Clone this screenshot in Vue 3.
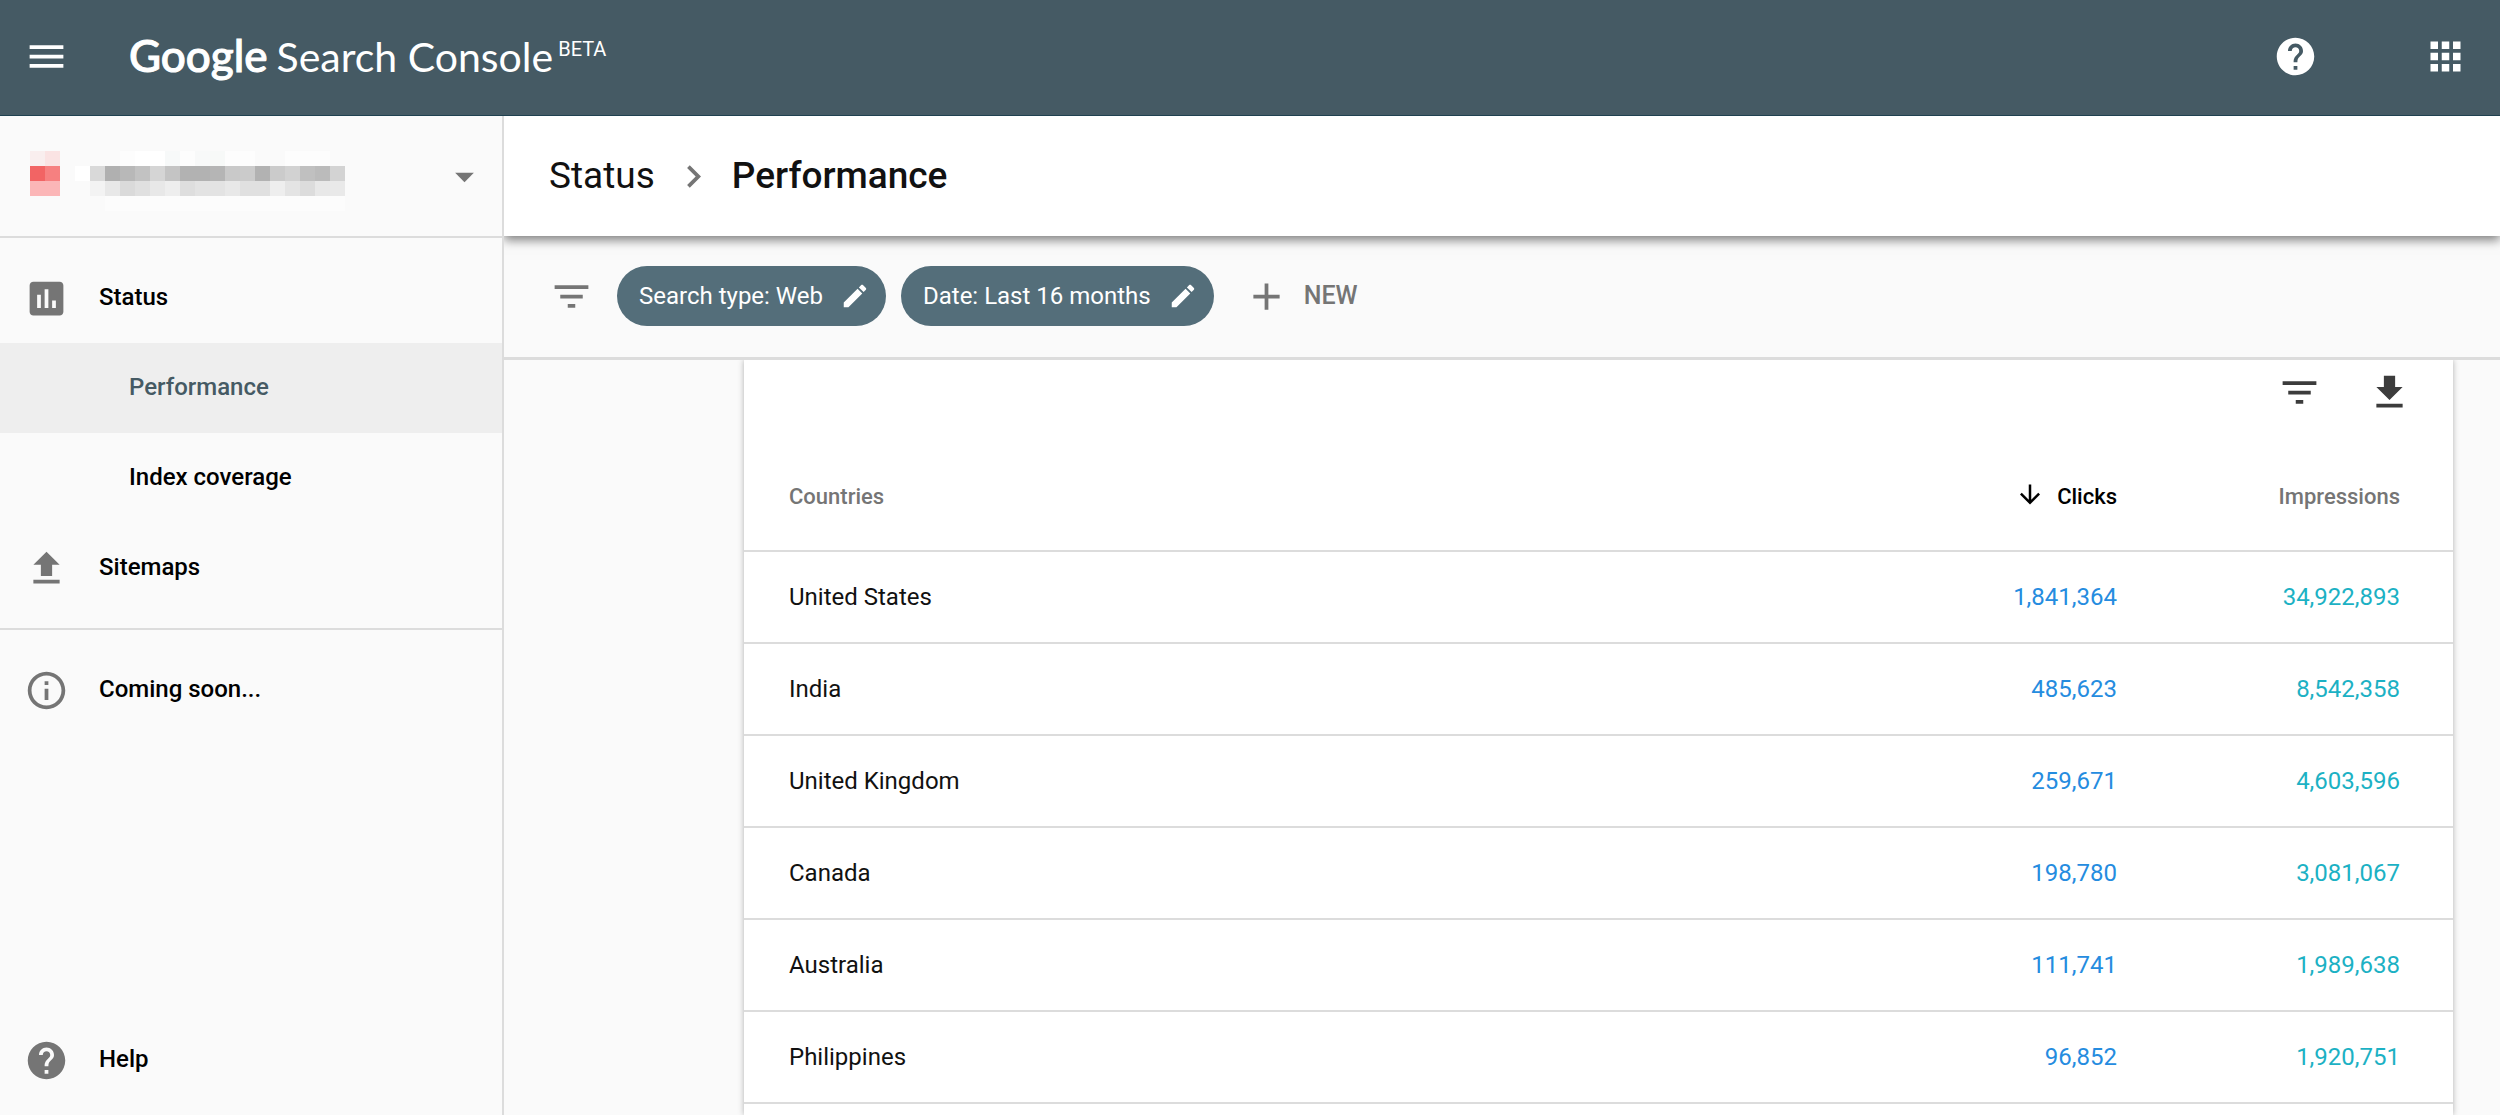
<template>
  <div class="console">
    <header class="topbar">
      <button class="icon-btn" type="button" aria-label="Menu">
        <svg class="icon" viewBox="0 0 24 24"><path d="M3 18h18v-2H3v2zm0-5h18v-2H3v2zm0-7v2h18V6H3z" /></svg>
      </button>
      <a class="logo" href="#">
        <span class="logo-google">Google</span>
        <span class="logo-product">Search Console</span>
        <span class="logo-beta">BETA</span>
      </a>
      <div class="topbar-actions">
        <button class="icon-btn" type="button" aria-label="Help">
          <svg class="icon" viewBox="0 0 24 24"><path :d="icons.help" /></svg>
        </button>
        <button class="icon-btn" type="button" aria-label="Google apps">
          <svg class="icon" viewBox="0 0 24 24"><path d="M4 8h4V4H4v4zm6 12h4v-4h-4v4zm-6 0h4v-4H4v4zm0-6h4v-4H4v4zm6 0h4v-4h-4v4zm6-10v4h4V4h-4zm-6 4h4V4h-4v4zm6 6h4v-4h-4v4zm0 6h4v-4h-4v4z" /></svg>
        </button>
      </div>
    </header>

    <div class="body">
      <aside class="sidebar">
        <button class="property" type="button" aria-label="Select property">
          <svg class="mosaic" viewBox="0 0 22 4" shape-rendering="crispEdges" aria-hidden="true">
            <rect v-for="c in mosaic" :key="c.key" :x="c.x" :y="c.y" width="1" height="1" :fill="c.fill" />
          </svg>
          <svg class="icon muted" viewBox="0 0 24 24"><path d="M7 10l5 5 5-5z" /></svg>
        </button>

        <nav class="nav">
          <template v-for="item in navItems" :key="item.label">
            <hr v-if="item.divider" class="divider">
            <a
              href="#"
              class="nav-item"
              :class="{ active: item.active, child: item.child, bottom: item.bottom }"
            >
              <svg v-if="item.icon" class="icon muted" viewBox="0 0 24 24"><path :d="icons[item.icon]" /></svg>
              <span>{{ item.label }}</span>
            </a>
          </template>
        </nav>
      </aside>

      <main class="content">
        <div class="breadcrumb">
          <a href="#">Status</a>
          <svg class="icon muted" viewBox="0 0 24 24"><path d="M10 6L8.59 7.41 13.17 12l-4.58 4.59L10 18l6-6z" /></svg>
          <h1>Performance</h1>
        </div>

        <div class="filters">
          <svg class="icon muted" viewBox="0 0 24 24"><path :d="icons.filter" /></svg>
          <div class="chips">
            <button v-for="chip in chips" :key="chip" class="chip" type="button">
              {{ chip }}
              <svg class="icon-small" viewBox="0 0 24 24"><path :d="icons.edit" /></svg>
            </button>
          </div>
          <button class="new-btn" type="button">
            <svg class="icon" viewBox="0 0 24 24"><path d="M19 13h-6v6h-2v-6H5v-2h6V5h2v6h6v2z" /></svg>
            NEW
          </button>
        </div>

        <div class="scroll-area">
          <section class="card">
            <div class="card-tools">
              <button class="icon-btn" type="button" aria-label="Filter rows">
                <svg class="icon" viewBox="0 0 24 24"><path :d="icons.filter" /></svg>
              </button>
              <button class="icon-btn" type="button" aria-label="Download">
                <svg class="icon" viewBox="0 0 24 24"><path d="M19 9h-4V3H9v6H5l7 7 7-7zM5 18v2h14v-2H5z" /></svg>
              </button>
            </div>
            <table>
              <thead>
                <tr>
                  <th scope="col">Countries</th>
                  <th scope="col" class="num sorted" aria-sort="descending">
                    <span class="sort">
                      <svg class="icon-small" viewBox="0 0 24 24"><path d="M20 10l-1.41-1.41L13 14.17V2h-2v12.17l-5.58-5.59L4 10l8 8 8-8z" /></svg>
                      Clicks
                    </span>
                  </th>
                  <th scope="col" class="num last">Impressions</th>
                </tr>
              </thead>
              <tbody>
                <tr v-for="row in rows" :key="row.country">
                  <td>{{ row.country }}</td>
                  <td class="num clicks">{{ row.clicks.toLocaleString('en-US') }}</td>
                  <td class="num last impressions">{{ row.impressions.toLocaleString('en-US') }}</td>
                </tr>
              </tbody>
            </table>
          </section>
        </div>
      </main>
    </div>
  </div>
</template>

<script setup>
const icons = {
  help: 'M12 2C6.48 2 2 6.48 2 12s4.48 10 10 10 10-4.48 10-10S17.52 2 12 2zm1 17h-2v-2h2v2zm2.07-7.75l-.9.92C13.45 12.9 13 13.5 13 15h-2v-.5c0-1.1.45-2.1 1.17-2.83l1.24-1.26c.37-.36.59-.86.59-1.41 0-1.1-.9-2-2-2s-2 .9-2 2H8c0-2.21 1.79-4 4-4s4 1.79 4 4c0 .88-.36 1.68-.93 2.25z',
  chart: 'M19 3H5c-1.1 0-2 .9-2 2v14c0 1.1.9 2 2 2h14c1.1 0 2-.9 2-2V5c0-1.1-.9-2-2-2zM9 17H7v-7h2v7zm4 0h-2V7h2v10zm4 0h-2v-4h2v4z',
  upload: 'M9 16h6v-6h4l-7-7-7 7h4zm-4 2h14v2H5z',
  info: 'M11 7h2v2h-2zm0 4h2v6h-2zm1-9C6.48 2 2 6.48 2 12s4.48 10 10 10 10-4.48 10-10S17.52 2 12 2zm0 18c-4.41 0-8-3.59-8-8s3.59-8 8-8 8 3.59 8 8-3.59 8-8 8z',
  filter: 'M10 18h4v-2h-4v2zM3 6v2h18V6H3zm3 7h12v-2H6v2z',
  edit: 'M3 17.25V21h3.75L17.81 9.94l-3.75-3.75L3 17.25zM20.71 7.04c.39-.39.39-1.02 0-1.41l-2.34-2.34c-.39-.39-1.02-.39-1.41 0l-1.83 1.83 3.75 3.75 1.83-1.83z'
}

const navItems = [
  { label: 'Status', icon: 'chart' },
  { label: 'Performance', child: true, active: true },
  { label: 'Index coverage', child: true },
  { label: 'Sitemaps', icon: 'upload' },
  { label: 'Coming soon...', icon: 'info', divider: true },
  { label: 'Help', icon: 'help', bottom: true }
]

const chips = ['Search type: Web', 'Date: Last 16 months']

const rows = [
  { country: 'United States', clicks: 1841364, impressions: 34922893 },
  { country: 'India', clicks: 485623, impressions: 8542358 },
  { country: 'United Kingdom', clicks: 259671, impressions: 4603596 },
  { country: 'Canada', clicks: 198780, impressions: 3081067 },
  { country: 'Australia', clicks: 111741, impressions: 1989638 },
  { country: 'Philippines', clicks: 96852, impressions: 1920751 }
]

// Pixelated favicon and property name, one colour per cell
const mosaicRows = [
  '#f9eeee #fae3e3 - - - - #fdfdfd #fff #fff #f7f9f9 #fdfdfd #f8f9f9 #f7f9f8 #fdfdfd #fdfdfd #fafafa #fafafa #fdfdfd #fdfdfd #fdfdfd - -',
  '#f26464 #f68080 - #fff #d9d9d9 #b0b0b0 #b8b8b8 #c2c2c2 #d5d5d5 #c4c4c4 #b2b2b2 #b2b2b2 #b5b5b5 #c9c9c9 #cbcbcb #b2b2b2 #cbcbcb #d2d2d2 #c0c0c0 #bbbbbb #d3d3d3 -',
  '#fbb6b7 #fbb6b7 - - #f3f3f3 #e8e8e8 #dadada #e0e0e0 #e8e8e8 #eeeeee #dedede #e3e3e3 #e3e3e3 #e8e8e8 #e0e0e0 #e0e0e0 #eeeeee #e4e4e4 #dcdcdc #e8e8e8 #e9e9e9 -',
  '- - - - - #fcfcfc #fcfcfc #fcfcfc #fcfcfc #fcfcfc #fcfcfc #fcfcfc #fcfcfc #fcfcfc #fcfcfc #fcfcfc #fcfcfc #fcfcfc #fcfcfc #fcfcfc #fcfcfc -'
]

const mosaic = mosaicRows.flatMap((line, y) =>
  line
    .split(' ')
    .map((fill, x) => ({ key: `${x}-${y}`, x, y, fill }))
    .filter(c => c.fill !== '-')
)
</script>

<style>
body {
  margin: 0;
}
</style>

<style scoped>
.console {
  display: flex;
  flex-direction: column;
  height: 100vh;
  overflow: hidden;
  font-family: Roboto, "Liberation Sans", sans-serif;
  font-size: 24px;
  line-height: 30px;
  color: #111;
  background: #fafafa;
}

a {
  color: inherit;
  text-decoration: none;
}

button {
  border: 0;
  padding: 0;
  background: none;
  color: inherit;
  font: inherit;
  cursor: pointer;
}

.icon,
.icon-small {
  display: block;
  flex: none;
  width: 45px;
  height: 45px;
  fill: currentColor;
}

.icon-small {
  width: 30px;
  height: 30px;
}

.muted {
  color: #757575;
}

/* Top bar */
.topbar {
  display: flex;
  align-items: center;
  box-sizing: border-box;
  flex: none;
  height: 116px;
  padding: 0 32px 3px 24px;
  border-bottom: 1px solid #1f4150;
  background: #455a64;
  color: #fff;
}

.logo {
  display: flex;
  align-items: baseline;
  margin-left: 60px;
  font-family: Lato, "Open Sans", sans-serif;
  font-size: 40px;
  line-height: 54px;
}

.logo-google {
  margin-right: 9px;
  font-size: 44px;
  font-weight: 500;
  -webkit-text-stroke: 1px currentColor;
}

.logo-product {
  font-size: 41px;
}

.logo-beta {
  align-self: flex-start;
  margin-left: 5px;
  font-family: Roboto, sans-serif;
  font-size: 20px;
  line-height: 42px;
}

.topbar-actions {
  display: flex;
  gap: 105px;
  margin-left: auto;
}

.body {
  display: flex;
  flex: 1;
  min-height: 0;
}

/* Sidebar */
.sidebar {
  display: flex;
  flex-direction: column;
  flex: none;
  width: 502px;
  border-right: 2px solid #dcdcdc;
}

.property {
  display: flex;
  align-items: center;
  justify-content: space-between;
  height: 122px;
  padding: 0 15px 0 30px;
  border-bottom: 2px solid #dcdcdc;
}

.mosaic {
  width: 330px;
  height: 60px;
  margin-top: 10px;
}

.nav {
  display: flex;
  flex-direction: column;
  flex: 1;
  padding: 15px 0 10px;
}

.nav-item {
  display: flex;
  align-items: center;
  gap: 30px;
  height: 90px;
  padding-left: 24px;
  font-weight: 500;
  color: #000;
}

.nav-item span {
  padding-bottom: 2px;
}

.nav-item.child {
  padding-left: 129px;
}

.nav-item.active {
  background: #eee;
  color: #455a64;
}

.nav-item.bottom {
  margin-top: auto;
}

.divider {
  width: 100%;
  height: 2px;
  margin: 15px 0;
  border: 0;
  background: #dcdcdc;
}

/* Main column */
.content {
  display: flex;
  flex-direction: column;
  flex: 1;
  min-width: 0;
}

.breadcrumb {
  display: flex;
  align-items: center;
  gap: 16px;
  flex: none;
  height: 120px;
  padding-left: 45px;
  background: #fff;
  box-shadow: 0 4px 10px rgba(0, 0, 0, 0.5);
  clip-path: inset(0 0 -20px 0);
  font-size: 37px;
  z-index: 1;
}

.breadcrumb h1 {
  margin: 0;
  font-size: inherit;
  font-weight: 500;
}

.filters {
  display: flex;
  align-items: center;
  flex: none;
  height: 120px;
  padding: 0 0 1px 45px;
  border-bottom: 3px solid #dcdcdc;
}

.chips {
  display: flex;
  gap: 15px;
  margin-left: 23px;
}

.chip {
  display: flex;
  align-items: center;
  gap: 17px;
  height: 60px;
  padding: 0 16px 0 22px;
  border-radius: 30px;
  background: #546e7a;
  color: #fff;
}

.new-btn {
  display: flex;
  align-items: center;
  gap: 15px;
  margin-left: 30px;
  color: #757575;
  font-size: 25px;
  font-weight: 500;
}

.scroll-area {
  display: flex;
  flex: 1;
  min-height: 0;
  padding: 0 47px 0 240px;
  overflow: hidden;
}

.card {
  flex: 1;
  background: #fff;
  box-shadow: 0 0 6px rgba(0, 0, 0, 0.3);
}

.card-tools {
  display: flex;
  align-items: flex-start;
  justify-content: flex-end;
  gap: 45px;
  height: 74px;
  padding: 10px 41px 0 0;
  color: #3c3c3c;
}

table {
  width: 100%;
  border-collapse: separate;
  border-spacing: 0;
}

th,
td {
  box-sizing: border-box;
  height: 92px;
  padding: 0 0 0 45px;
  border-bottom: 2px solid #dcdcdc;
  text-align: left;
}

th {
  height: 108px;
  font-size: 22px;
  font-weight: 500;
  color: #757575;
}

.num {
  width: 336px;
  text-align: right;
}

.last {
  padding-right: 53px;
}

.sorted {
  color: #000;
}

.sort {
  display: flex;
  justify-content: flex-end;
  gap: 12px;
}

.clicks {
  color: #258cdf;
}

.impressions {
  color: #1cb1c4;
}
</style>
